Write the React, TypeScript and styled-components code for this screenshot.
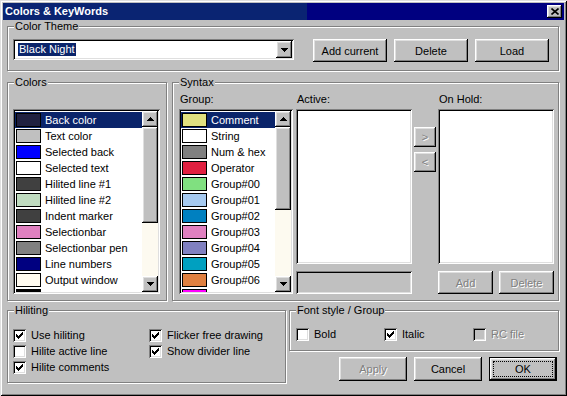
import styled, { createGlobalStyle } from 'styled-components';

const GlobalStyle = createGlobalStyle`
  html, body {
    margin: 0;
    padding: 0;
    background: #c0c0c0;
  }
  * {
    box-sizing: border-box;
  }
  body {
    font-family: 'Liberation Sans', Arial, sans-serif;
    font-size: 11px;
    color: #000;
  }
`;

const raised = `
  box-shadow: inset -1px -1px #000, inset 1px 1px #fff, inset -2px -2px #808080, inset 2px 2px #dfdfdf;
`;
const sunken = `
  box-shadow: inset 1px 1px #808080, inset -1px -1px #fff, inset 2px 2px #000, inset -2px -2px #dfdfdf;
`;
const disabledText = `
  color: #808080;
  text-shadow: 1px 1px #fff;
`;

const Window = styled.div`
  width: 567px;
  height: 396px;
  padding: 3px;
  background: #c0c0c0;
  box-shadow: inset 1px 1px #dfdfdf, inset -1px -1px #000, inset 2px 2px #fff, inset -2px -2px #808080;
  display: flex;
  flex-direction: column;
`;

const TitleBar = styled.div`
  height: 17px;
  display: flex;
  align-items: center;
  padding: 0 2px 0 2px;
  background: linear-gradient(to right, #0a2472 0, #0a2472 304px, #000080 304px);
  color: #fff;
  font-weight: bold;
  line-height: 13px;
`;

const CloseButton = styled.div`
  margin-left: auto;
  width: 15px;
  height: 13px;
  background: #c0c0c0;
  ${raised}
  display: flex;
  align-items: center;
  justify-content: center;
`;

const Body = styled.div`
  padding: 6px 5px 0 4px;
  display: flex;
  flex-direction: column;
`;

const Group = styled.div<{ $w?: number; $h: number }>`
  position: relative;
  width: ${(p) => (p.$w ? `${p.$w}px` : 'auto')};
  height: ${(p) => p.$h}px;
  border: 1px solid #808080;
  box-shadow: inset 1px 1px #fff, 1px 1px #fff;
`;

const Legend = styled.span`
  position: absolute;
  top: -7px;
  left: 6px;
  padding: 0 1px;
  background: #c0c0c0;
  line-height: 13px;
  white-space: nowrap;
`;

const ThemeRow = styled.div`
  display: flex;
  align-items: flex-start;
  padding: 12px 0 0 5px;
`;

const Combo = styled.div`
  width: 281px;
  height: 21px;
  padding: 2px;
  background: #fff;
  ${sunken}
  display: flex;
  align-items: center;
  margin-right: 19px;
`;

const ComboText = styled.span`
  margin-left: 3px;
  padding: 0 1px;
  line-height: 13px;
  background: #0a246a;
  color: #fff;
`;

const ComboButton = styled.div`
  margin-left: auto;
  width: 16px;
  height: 17px;
  background: #c0c0c0;
  ${raised}
  display: flex;
  align-items: center;
  justify-content: center;
`;

const Button = styled.button<{ $w: number; $h: number; $default?: boolean }>`
  position: relative;
  width: ${(p) => p.$w}px;
  height: ${(p) => p.$h}px;
  padding: 0;
  border: ${(p) => (p.$default ? '1px solid #000' : 'none')};
  background: #c0c0c0;
  font: inherit;
  color: #000;
  ${raised}
  display: flex;
  align-items: center;
  justify-content: center;
  flex: none;

  &:disabled {
    ${disabledText}
  }

  &::after {
    content: '';
    display: ${(p) => (p.$default ? 'block' : 'none')};
    position: absolute;
    inset: 3px;
    border: 1px dotted #000;
  }
`;

const ThemeButtons = styled.div`
  display: flex;
  gap: 7px;
`;

const MiddleRow = styled.div`
  display: flex;
  gap: 5px;
  margin-top: 11px;
`;

const ColorsBody = styled.div`
  padding: 26px 6px 0 5px;
`;

const SyntaxBody = styled.div`
  display: flex;
  padding: 10px 4px 0 6px;
`;

const Column = styled.div<{ $w: number; $ml?: number; $pt?: number; $gap?: number }>`
  width: ${(p) => p.$w}px;
  margin-left: ${(p) => p.$ml ?? 0}px;
  padding-top: ${(p) => p.$pt ?? 0}px;
  display: flex;
  flex-direction: column;
  gap: ${(p) => p.$gap ?? 0}px;
`;

const Label = styled.div`
  height: 13px;
  line-height: 13px;
  margin-bottom: 3px;
  padding-left: 1px;
`;

const ListBox = styled.div<{ $h: number; $bg?: string }>`
  height: ${(p) => p.$h}px;
  padding: 2px;
  background: ${(p) => p.$bg ?? '#fff'};
  ${sunken}
  display: flex;
`;

const ListItems = styled.div`
  flex: 1;
  padding-top: 1px;
  overflow: hidden;
`;

const ListRow = styled.div<{ $selected?: boolean }>`
  height: 16px;
  display: flex;
  align-items: center;
  padding-left: 1px;
  white-space: nowrap;
  line-height: 16px;
  background: ${(p) => (p.$selected ? '#0a246a' : 'transparent')};
  color: ${(p) => (p.$selected ? '#fff' : '#000')};
`;

const Swatch = styled.span<{ $color: string }>`
  flex: none;
  width: 25px;
  height: 14px;
  border: 1px solid #000;
  background: ${(p) => p.$color};
  margin-right: 4px;
`;

const ScrollBar = styled.div`
  width: 16px;
  display: flex;
  flex-direction: column;
  background: #fdfaf0;
`;

const ScrollButton = styled.div`
  width: 16px;
  height: 16px;
  flex: none;
  background: #c0c0c0;
  ${raised}
  display: flex;
  align-items: center;
  justify-content: center;
`;

const Thumb = styled.div<{ $h: number }>`
  height: ${(p) => p.$h}px;
  flex: none;
  background: #c0c0c0;
  ${raised}
`;

const Track = styled.div`
  flex: 1;
`;

const ButtonPair = styled.div`
  display: flex;
  gap: 6px;
`;

const BottomRow = styled.div`
  display: flex;
  gap: 3px;
  margin-top: 9px;
`;

const HiliteGrid = styled.div`
  display: grid;
  grid-template-columns: 136px auto;
  grid-auto-rows: 16px;
  padding: 18px 0 0 5px;
`;

const FontGrid = styled.div`
  display: grid;
  grid-template-columns: 88px 89px auto;
  padding: 17px 0 0 6px;
`;

const RightColumn = styled.div`
  width: 270px;
  display: flex;
  flex-direction: column;
`;

const DialogButtons = styled.div`
  display: flex;
  justify-content: flex-end;
  gap: 7px;
  margin-top: 6px;
  padding-right: 2px;
`;

const CheckRow = styled.div<{ $disabled?: boolean }>`
  display: flex;
  align-items: center;
  height: 13px;
  gap: 5px;
  line-height: 13px;
  white-space: nowrap;
  ${(p) => (p.$disabled ? disabledText : '')}
`;

const Box = styled.span<{ $disabled?: boolean }>`
  flex: none;
  width: 13px;
  height: 13px;
  padding: 2px;
  background: ${(p) => (p.$disabled ? '#c0c0c0' : '#fff')};
  ${sunken}
  display: flex;
`;

const ArrowIcon = ({ down }: { down?: boolean }) => (
  <svg width="7" height="4" viewBox="0 0 7 4" shapeRendering="crispEdges">
    <polygon points={down ? '0,0 7,0 3.5,4' : '3.5,0 7,4 0,4'} fill="#000" />
  </svg>
);

const CloseIcon = () => (
  <svg width="8" height="7" viewBox="0 0 8 7">
    <path d="M0.5 0.5 L7.5 6.5 M7.5 0.5 L0.5 6.5" stroke="#000" strokeWidth="1.6" />
  </svg>
);

const CheckMark = () => (
  <svg width="9" height="9" viewBox="0 0 9 9" shapeRendering="crispEdges">
    <polygon points="1,3 3,5 8,0 8,3 3,8 1,6" fill="#000" />
  </svg>
);

const Checkbox = ({ label, checked, disabled }: { label: string; checked?: boolean; disabled?: boolean }) => (
  <CheckRow $disabled={disabled}>
    <Box $disabled={disabled}>{checked && <CheckMark />}</Box>
    <span>{label}</span>
  </CheckRow>
);

const Scroller = ({ thumb }: { thumb: number }) => (
  <ScrollBar>
    <ScrollButton>
      <ArrowIcon />
    </ScrollButton>
    <Thumb $h={thumb} />
    <Track />
    <ScrollButton>
      <ArrowIcon down />
    </ScrollButton>
  </ScrollBar>
);

const colorItems: [string, string][] = [
  ['Back color', '#202040'],
  ['Text color', '#c0c0c0'],
  ['Selected back', '#0000ff'],
  ['Selected text', '#ffffff'],
  ['Hilited line #1', '#404040'],
  ['Hilited line #2', '#c0dcc0'],
  ['Indent marker', '#404040'],
  ['Selectionbar', '#e080c0'],
  ['Selectionbar pen', '#808080'],
  ['Line numbers', '#000080'],
  ['Output window', '#fffbf0'],
  ['Output text', '#000000'],
];

const groupItems: [string, string][] = [
  ['Comment', '#e0e080'],
  ['String', '#ffffff'],
  ['Num & hex', '#808080'],
  ['Operator', '#e02040'],
  ['Group#00', '#80e080'],
  ['Group#01', '#a6caf0'],
  ['Group#02', '#0080c0'],
  ['Group#03', '#e080c0'],
  ['Group#04', '#8080c0'],
  ['Group#05', '#00a0c0'],
  ['Group#06', '#e08040'],
  ['Group#07', '#ff00ff'],
];

const SwatchList = ({ items, thumb }: { items: [string, string][]; thumb: number }) => (
  <ListBox $h={185}>
    <ListItems>
      {items.map(([name, color], i) => (
        <ListRow key={name} $selected={i === 0}>
          <Swatch $color={color} />
          {name}
        </ListRow>
      ))}
    </ListItems>
    <Scroller thumb={thumb} />
  </ListBox>
);

export default function App() {
  return (
    <>
      <GlobalStyle />
      <Window>
        <TitleBar>
          Colors &amp; KeyWords
          <CloseButton>
            <CloseIcon />
          </CloseButton>
        </TitleBar>
        <Body>
          <Group $h={45}>
            <Legend>Color Theme</Legend>
            <ThemeRow>
              <Combo>
                <ComboText>Black Night</ComboText>
                <ComboButton>
                  <ArrowIcon down />
                </ComboButton>
              </Combo>
              <ThemeButtons>
                <Button $w={74} $h={23}>Add current</Button>
                <Button $w={74} $h={23}>Delete</Button>
                <Button $w={74} $h={23}>Load</Button>
              </ThemeButtons>
            </ThemeRow>
          </Group>

          <MiddleRow>
            <Group $w={160} $h={219}>
              <Legend>Colors</Legend>
              <ColorsBody>
                <SwatchList items={colorItems} thumb={96} />
              </ColorsBody>
            </Group>
            <Group $w={387} $h={219}>
              <Legend>Syntax</Legend>
              <SyntaxBody>
                <Column $w={114}>
                  <Label>Group:</Label>
                  <SwatchList items={groupItems} thumb={83} />
                </Column>
                <Column $w={116} $ml={3}>
                  <Label>Active:</Label>
                  <ListBox $h={155} />
                  <ListBox $h={23} $bg="#c0c0c0" style={{ marginTop: 7 }} />
                </Column>
                <Column $w={22} $ml={2} $pt={34} $gap={5}>
                  <Button $w={22} $h={20} disabled>&gt;</Button>
                  <Button $w={22} $h={20} disabled>&lt;</Button>
                </Column>
                <Column $w={116} $ml={2}>
                  <Label>On Hold:</Label>
                  <ListBox $h={155} />
                  <ButtonPair style={{ marginTop: 7 }}>
                    <Button $w={55} $h={23} disabled>Add</Button>
                    <Button $w={55} $h={23} disabled>Delete</Button>
                  </ButtonPair>
                </Column>
              </SyntaxBody>
            </Group>
          </MiddleRow>

          <BottomRow>
            <Group $w={279} $h={73}>
              <Legend>Hiliting</Legend>
              <HiliteGrid>
                <Checkbox label="Use hiliting" checked />
                <Checkbox label="Flicker free drawing" checked />
                <Checkbox label="Hilite active line" />
                <Checkbox label="Show divider line" checked />
                <Checkbox label="Hilite comments" checked />
              </HiliteGrid>
            </Group>
            <RightColumn>
              <Group $h={41}>
                <Legend>Font style / Group</Legend>
                <FontGrid>
                  <Checkbox label="Bold" />
                  <Checkbox label="Italic" checked />
                  <Checkbox label="RC file" disabled />
                </FontGrid>
              </Group>
              <DialogButtons>
                <Button $w={68} $h={24} disabled>Apply</Button>
                <Button $w={68} $h={24}>Cancel</Button>
                <Button $w={68} $h={24} $default>OK</Button>
              </DialogButtons>
            </RightColumn>
          </BottomRow>
        </Body>
      </Window>
    </>
  );
}
